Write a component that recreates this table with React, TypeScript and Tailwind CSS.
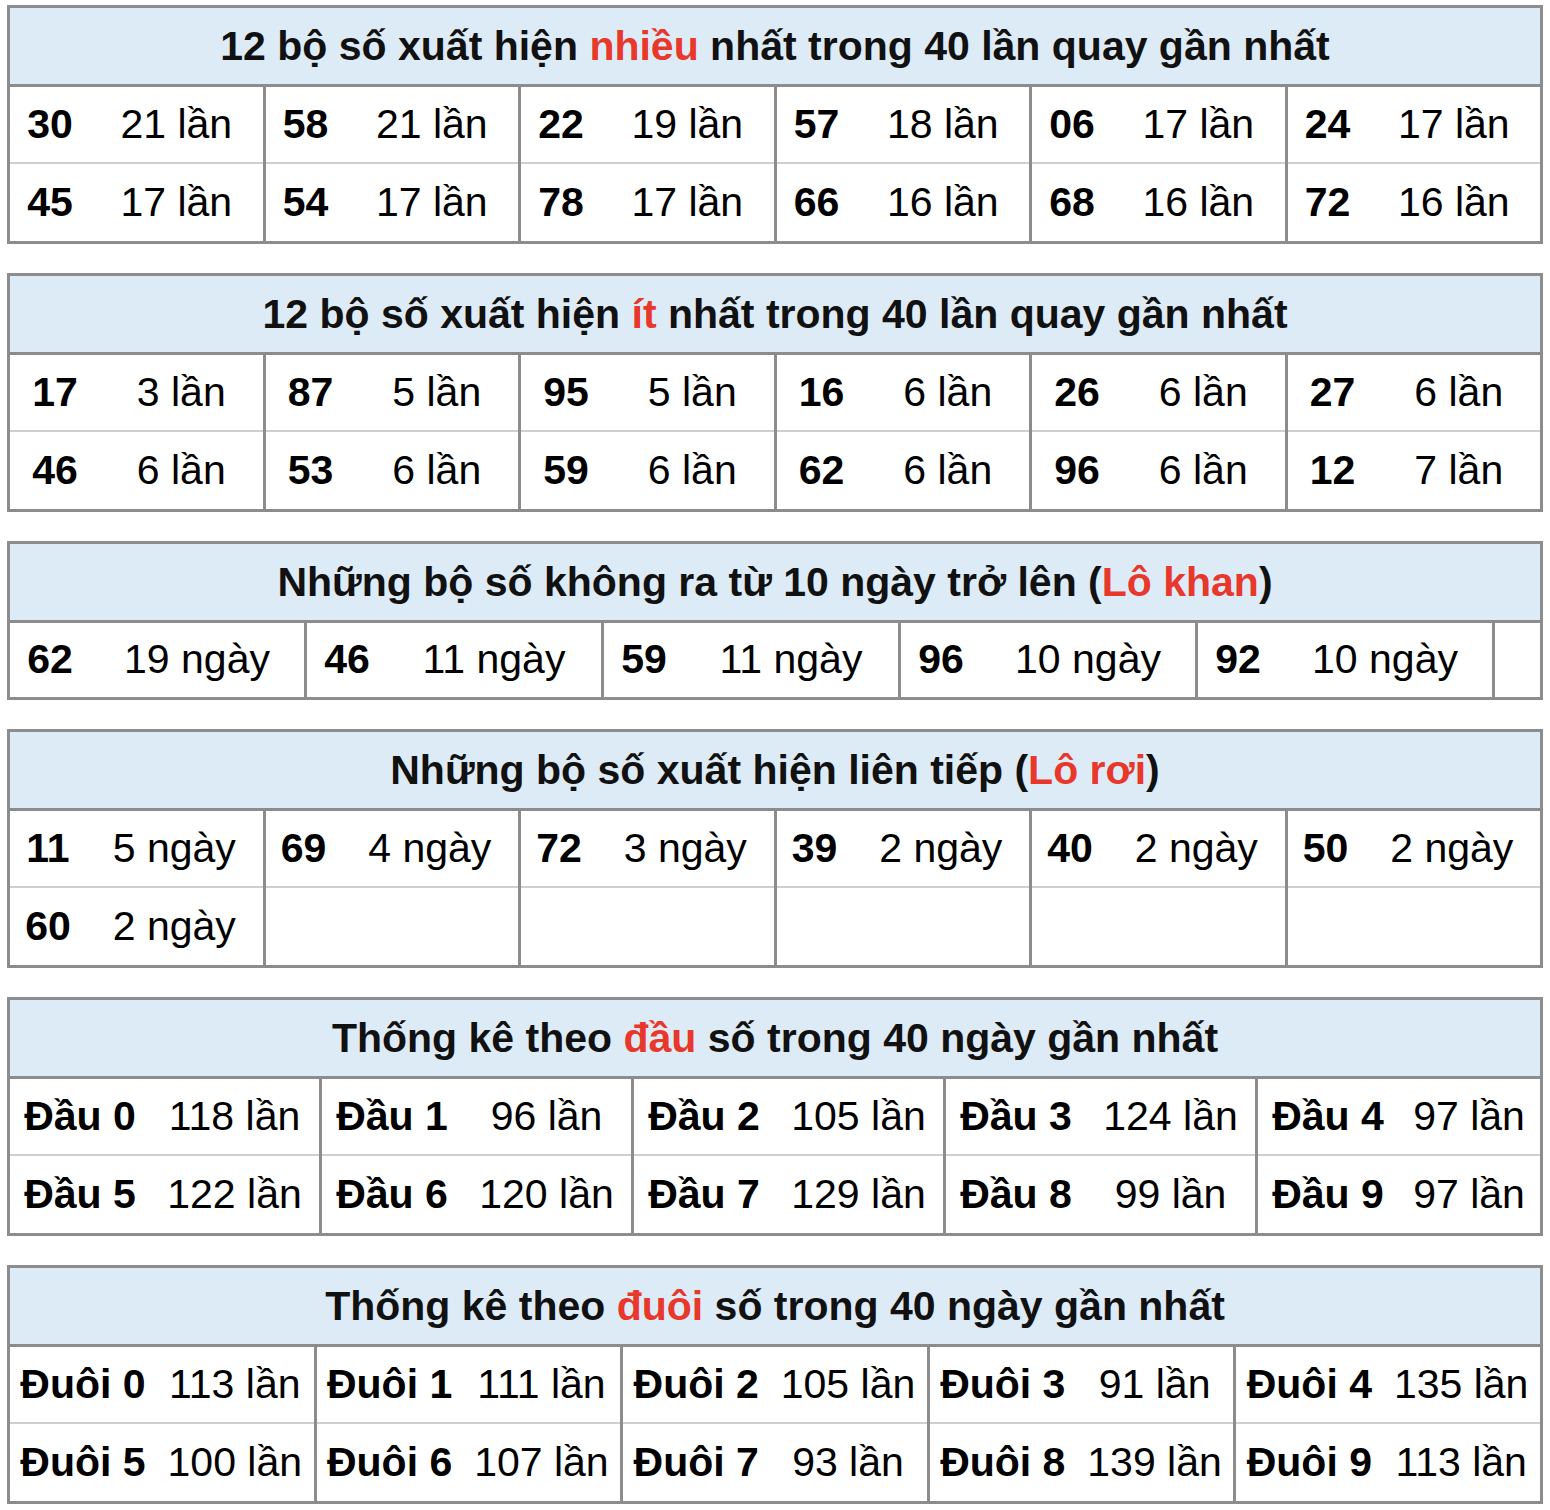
import React from 'react';

type Item = [string, string] | null;

interface StatTableProps {
  title: React.ReactNode;
  rows: Item[][];
  numW: string;
  rowH?: string;
  groupW?: string[];
  trailing?: boolean;
}

const Red: React.FC<{ children: React.ReactNode }> = ({ children }) => (
  <span className="text-[#e8372b]">{children}</span>
);

const StatTable: React.FC<StatTableProps> = ({ title, rows, numW, rowH = 'h-[77px]', groupW, trailing }) => {
  return (
    <div className="border-[3px] border-[#8c8c8c]">
      <div className="h-[79px] flex items-center justify-center bg-[#ddebf7] border-b-[3px] border-[#8c8c8c] font-bold text-[#111] leading-none">
        {title}
      </div>
      {rows.map((row, ri) => {
        const lastRow = ri === rows.length - 1;
        const cellBorder = lastRow ? '' : 'border-b-2 border-[#cfcfcf]';
        return (
          <div key={ri} className={`flex ${rowH}`}>
            {row.map((item, gi) => {
              const lastGroup = gi === row.length - 1 && !trailing;
              return (
                <div
                  key={gi}
                  className={`flex ${groupW ? groupW[gi] : 'flex-1'} ${lastGroup ? '' : 'border-r-[3px] border-[#8c8c8c]'}`}
                >
                  <div className={`${numW} shrink-0 flex items-center justify-center font-bold ${cellBorder}`}>
                    {item ? item[0] : ''}
                  </div>
                  <div className={`flex-1 flex items-center justify-center ${cellBorder}`}>
                    {item ? item[1] : ''}
                  </div>
                </div>
              );
            })}
            {trailing && <div className={`flex-1 ${cellBorder}`} />}
          </div>
        );
      })}
    </div>
  );
};

const nhieu: Item[][] = [
  [['30', '21 lần'], ['58', '21 lần'], ['22', '19 lần'], ['57', '18 lần'], ['06', '17 lần'], ['24', '17 lần']],
  [['45', '17 lần'], ['54', '17 lần'], ['78', '17 lần'], ['66', '16 lần'], ['68', '16 lần'], ['72', '16 lần']],
];

const it: Item[][] = [
  [['17', '3 lần'], ['87', '5 lần'], ['95', '5 lần'], ['16', '6 lần'], ['26', '6 lần'], ['27', '6 lần']],
  [['46', '6 lần'], ['53', '6 lần'], ['59', '6 lần'], ['62', '6 lần'], ['96', '6 lần'], ['12', '7 lần']],
];

const khan: Item[][] = [
  [['62', '19 ngày'], ['46', '11 ngày'], ['59', '11 ngày'], ['96', '10 ngày'], ['92', '10 ngày']],
];

const roi: Item[][] = [
  [['11', '5 ngày'], ['69', '4 ngày'], ['72', '3 ngày'], ['39', '2 ngày'], ['40', '2 ngày'], ['50', '2 ngày']],
  [['60', '2 ngày'], null, null, null, null, null],
];

const dau: Item[][] = [
  [['Đầu 0', '118 lần'], ['Đầu 1', '96 lần'], ['Đầu 2', '105 lần'], ['Đầu 3', '124 lần'], ['Đầu 4', '97 lần']],
  [['Đầu 5', '122 lần'], ['Đầu 6', '120 lần'], ['Đầu 7', '129 lần'], ['Đầu 8', '99 lần'], ['Đầu 9', '97 lần']],
];

const duoi: Item[][] = [
  [['Đuôi 0', '113 lần'], ['Đuôi 1', '111 lần'], ['Đuôi 2', '105 lần'], ['Đuôi 3', '91 lần'], ['Đuôi 4', '135 lần']],
  [['Đuôi 5', '100 lần'], ['Đuôi 6', '107 lần'], ['Đuôi 7', '93 lần'], ['Đuôi 8', '139 lần'], ['Đuôi 9', '113 lần']],
];

export default function App() {
  return (
    <div className="min-h-screen bg-white font-['Liberation_Sans',Arial,sans-serif] text-[41px] text-black">
      <div className="w-[1536px] ml-[7px] pt-[5px] pb-[8px] flex flex-col gap-[29px]">
        <StatTable
          title={<span>12 bộ số xuất hiện <Red>nhiều</Red> nhất trong 40 lần quay gần nhất</span>}
          rows={nhieu}
          numW="w-[80px]"
        />
        <StatTable
          title={<span>12 bộ số xuất hiện <Red>ít</Red> nhất trong 40 lần quay gần nhất</span>}
          rows={it}
          numW="w-[90px]"
        />
        <StatTable
          title={<span>Những bộ số không ra từ 10 ngày trở lên (<Red>Lô khan</Red>)</span>}
          rows={khan}
          numW="w-[80px]"
          rowH="h-[74px]"
          groupW={['w-[297px]', 'w-[297px]', 'w-[297px]', 'w-[297px]', 'w-[297px]']}
          trailing
        />
        <StatTable
          title={<span>Những bộ số xuất hiện liên tiếp (<Red>Lô rơi</Red>)</span>}
          rows={roi}
          numW="w-[76px]"
        />
        <StatTable
          title={<span>Thống kê theo <Red>đầu</Red> số trong 40 ngày gần nhất</span>}
          rows={dau}
          numW="w-[140px]"
          groupW={['w-[312px]', 'w-[312px]', 'w-[312px]', 'w-[312px]', 'flex-1']}
        />
        <StatTable
          title={<span>Thống kê theo <Red>đuôi</Red> số trong 40 ngày gần nhất</span>}
          rows={duoi}
          numW="w-[146px]"
        />
      </div>
    </div>
  );
}
